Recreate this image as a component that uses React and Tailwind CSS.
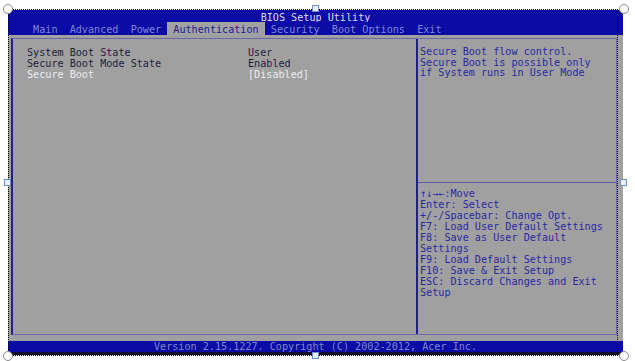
import React from "react";

export default function App() {
  const tabs = ["Main", "Advanced", "Power", "Authentication", "Security", "Boot Options", "Exit"];
  const help = [
    "\u2191\u2193\u2192\u2190:Move",
    "Enter: Select",
    "+/-/Spacebar: Change Opt.",
    "F7: Load User Default Settings",
    "F8: Save as User Default",
    "Settings",
    "F9: Load Default Settings",
    "F10: Save & Exit Setup",
    "ESC: Discard Changes and Exit",
    "Setup",
  ];
  return (
    <div className="relative w-[635px] h-[361px] bg-white overflow-hidden">
      <div className="pl-[8px] pt-[10px]">
        <div
          className="w-[615px] h-[345px] flex flex-col text-[10.15px] leading-[11px] whitespace-pre"
          style={{ fontFamily: '"DejaVu Sans Mono", "Liberation Mono", monospace' }}
        >
          <div className="h-[12px] bg-[#0b0ba6] text-[#dcdcf0] text-center leading-[16px]">BIOS Setup Utility</div>
          <div className="h-[13px] bg-[#0b0ba6] flex pl-[19px]">
            {tabs.map((t) => (
              <div
                key={t}
                className={
                  "px-[1ch] leading-[15px] " +
                  (t === "Authentication" ? "bg-[#a2a2a2] text-[#1c1c90]" : "text-[#8088d0]")
                }
              >
                {t}
              </div>
            ))}
          </div>
          <div className="flex-1 bg-[#a0a0a0] pl-[3px] pr-[6px] pt-[3px] pb-[6px] flex">
            <div className="flex-1 flex border-l-2 border-l-[#20208a] border-t border-b border-r border-[#6a6aaa]">
              <div className="w-[403px] pl-[14px] pt-[8px]">
                <div className="flex text-[#22223a]">
                  <div className="w-[221px]">System Boot State</div>
                  <div>User</div>
                </div>
                <div className="flex text-[#22223a]">
                  <div className="w-[221px]">Secure Boot Mode State</div>
                  <div>Enabled</div>
                </div>
                <div className="flex text-[#ececf0]">
                  <div className="w-[221px]">Secure Boot</div>
                  <div>[Disabled]</div>
                </div>
              </div>
              <div className="flex-1 flex flex-col border-l-2 border-[#1e1e8c]">
                <div className="h-[144px] border-b border-[#5a5aa6] pl-[2px] pt-[8px] text-[#2a2aa0] leading-[10.7px]">
                  <div>Secure Boot flow control.</div>
                  <div>Secure Boot is possible only</div>
                  <div>if System runs in User Mode</div>
                </div>
                <div className="pl-[2px] pt-[5px] text-[#2a2aa0]">
                  {help.map((h, i) => (
                    <div key={i}>{h}</div>
                  ))}
                </div>
              </div>
            </div>
          </div>
          <div className="h-[11px] bg-[#0b0ba6] text-[#7f86c8] text-center leading-[12px]">
            Version 2.15.1227. Copyright (C) 2002-2012, Acer Inc.
          </div>
          <div className="h-[3px] bg-[#10102a]"></div>
        </div>
      </div>

      {/* selection overlay */}
      <div className="absolute left-[8px] top-[9px] w-[610px] h-[347px] border border-dotted border-black pointer-events-none"></div>
      {/* corner handles */}
      <div className="absolute left-[3px] top-[4px] w-[10px] h-[10px] rounded-full bg-white border border-[#8a8a8a]"></div>
      <div className="absolute left-[619px] top-[4px] w-[10px] h-[10px] rounded-full bg-white border border-[#8a8a8a]"></div>
      <div className="absolute left-[3px] top-[351px] w-[10px] h-[10px] rounded-full bg-white border border-[#8a8a8a]"></div>
      <div className="absolute left-[619px] top-[351px] w-[10px] h-[10px] rounded-full bg-white border border-[#8a8a8a]"></div>
      {/* edge handles */}
      <div className="absolute left-[312px] top-[5px] w-[7px] h-[7px] bg-[#e8f0ff] border border-[#6f8fcf]"></div>
      <div className="absolute left-[312px] top-[352px] w-[7px] h-[7px] bg-[#e8f0ff] border border-[#6f8fcf]"></div>
      <div className="absolute left-[4px] top-[179px] w-[7px] h-[7px] bg-[#e8f0ff] border border-[#6f8fcf]"></div>
      <div className="absolute left-[620px] top-[179px] w-[7px] h-[7px] bg-[#e8f0ff] border border-[#6f8fcf]"></div>
    </div>
  );
}
